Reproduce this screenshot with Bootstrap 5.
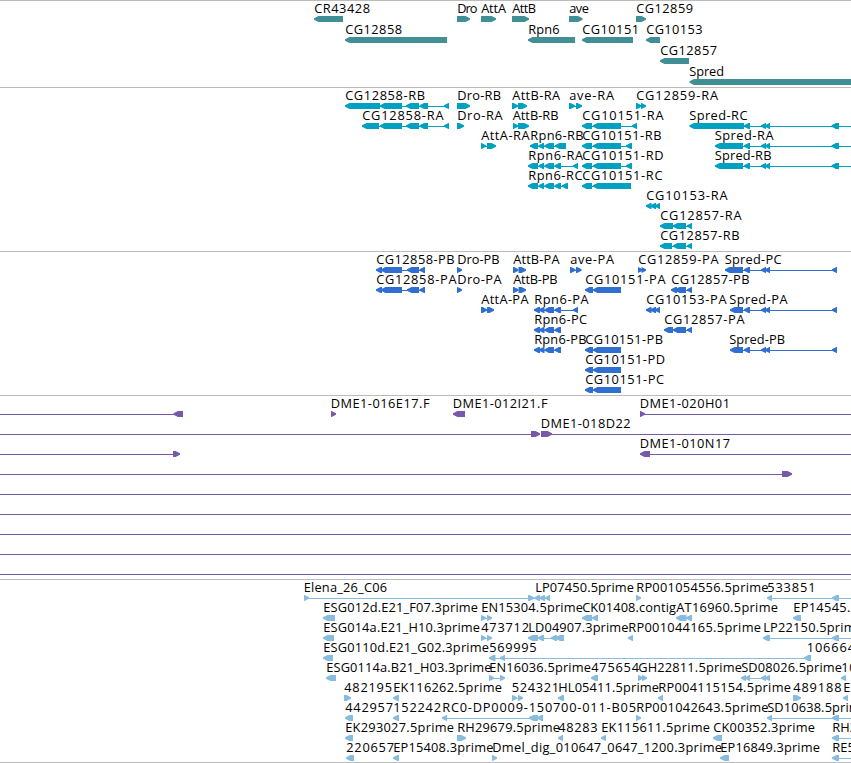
<!DOCTYPE html>
<html lang="en">
<head>
<meta charset="utf-8">
<meta name="viewport" content="width=device-width, initial-scale=1">
<title>Genome region</title>
<link href="https://cdn.jsdelivr.net/npm/bootstrap@5.3.0/dist/css/bootstrap.min.css" rel="stylesheet">
<style>
body { font-family: "Open Sans", "Noto Sans", sans-serif; }
.tier { border-top: 1px solid #bbb; overflow: hidden; padding-bottom: 3px; }
.tier-genes { color: #3f8f94; padding-bottom: 2px; }
.tier-transcripts { color: #00a0c0; }
.tier-proteins { color: #306fd0; }
.tier-clones { color: #7858a8; }
.tier-ests { color: #88bcde; padding-bottom: 2px; border-bottom: 1px solid #bbb; }
.lane { height: 20px; overflow: visible; }
.tier-genes .lane { height: 21px; }
.lane text { font-size: 12.8px; fill: #000; }
.lane path, .lane rect { fill: currentColor; }
</style>
<script src="https://cdn.jsdelivr.net/npm/bootstrap@5.3.0/dist/js/bootstrap.bundle.min.js"></script>
</head>
<body class="bg-white overflow-hidden">
<main class="d-flex flex-column" id="tiers"></main>
<script>
// Each lane lists features separated by ";".
// label: "T start end name", arrows: "L start end" / "R start end", connector: "- start end"
const spredR = 'L 744 750;L 761 766;L 765 770;L 831.5 839;- 740 851';
const spredP = 'L 744 750;L 761 766;L 765 770;L 832 837;- 740 837';
const tiers = {
genes: [
'T 314 370 CR43428;L 314 343;T 457 477.5 Dro;R 457 470;T 481 506 AttA;R 481 496;T 512 536 AttB;R 512 529;T 569 589 ave;R 569 582.5;T 636 693 CG12859;R 636 646',
'T 345 402 CG12858;L 345 447;T 528 559.5 Rpn6;L 528 575;T 582 639 CG10151;L 582 633;T 646 702.5 CG10153;L 646 660',
'T 660 717 CG12857;L 660 689',
'T 689 724 Spred;L 689.5 860'],
transcripts: [
'T 345 425 CG12858-RB;L 345 380;L 380 402;L 406 419;L 419.5 428;L 444 449;- 349 449;T 457 501 Dro-RB;R 457 470;T 512 560 AttB-RA;R 512 518;R 518 527;T 569 614 ave-RA;R 569 575;R 576 582;- 570 581;T 636 718 CG12859-RA;R 636 641.5;R 641 646',
'T 362 443.5 CG12858-RA;L 362 379;L 380 402;L 406 419;L 419.5 428;L 444 449;- 366 449;T 457 502.5 Dro-RA;R 457 464;T 512.5 558.5 AttB-RB;R 513 518;R 518 529;T 582 663.5 CG10151-RA;L 582 592;L 593 621;L 632 637;- 586 637;T 689 747.5 Spred-RC;L 689.5 744;' + spredR,
'T 481 529.5 AttA-RA;R 481 486;R 487 496;- 482 490;T 530 583.5 Rpn6-RB;L 530 538;L 538.5 544;L 544.5 554;L 555 566;- 534 564;T 582 661.5 CG10151-RB;L 582 592;L 593 621;L 626 632;- 586 632;T 714.5 773.5 Spred-RA;L 715 743;' + spredR,
'T 528 583 Rpn6-RA;L 528 538;L 538.5 544;L 544.5 554;L 554.5 561;L 573 578;- 532 578;T 582 663.5 CG10151-RD;L 582 592;L 593 621;L 626 632;- 586 632;T 714.5 771.5 Spred-RB;L 715 743;' + spredR,
'T 528 582.5 Rpn6-RC;L 528 538;L 538.5 544;L 544.5 554;L 554.5 561;L 562 568;- 532 568;T 582 662.5 CG10151-RC;L 582 592;L 593 631;- 586 600',
'T 646 727.5 CG10153-RA;L 646 651.5;L 650.5 656;L 655 660',
'T 660 741.5 CG12857-RA;L 660 673;L 673 686;L 687 692;- 664 692',
'T 660 739.5 CG12857-RB;L 660 672;L 673 686;L 687 692;- 664 692'],
proteins: [
'T 376 454.5 CG12858-PB;L 376 382;L 381 402;L 407 419;L 419.5 425;- 379 425;T 457 499.5 Dro-PB;R 457 462;T 513 559.5 AttB-PA;R 513 518.5;R 518.5 526;T 570 614 ave-PA;R 570 575.5;R 576 581.5;- 571 580;T 638 718.5 CG12859-PA;R 638 642.5;R 641.5 646;T 724.5 781.5 Spred-PC;L 725 743;' + spredP,
'T 376 456.5 CG12858-PA;L 376 382;L 381 402;L 407 419;L 419.5 425;- 379 425;T 457 501.5 Dro-PA;R 457 462;T 513 557.5 AttB-PB;R 513 518.5;R 518.5 526;T 585 665.5 CG10151-PA;L 585 593;L 593 621;- 589 600;T 671 749.5 CG12857-PB;L 671 677;L 675 686;L 687 692;- 673 692',
'T 481 528.5 AttA-PA;R 481 487;R 487 494;T 534 588.5 Rpn6-PA;L 534 540;L 539 544.5;L 544.5 554;L 554.5 561;L 573 578;- 536 578;T 646 726.5 CG10153-PA;L 646 651.5;L 650.5 656;L 655 660;T 729 787.5 Spred-PA;L 730 743;' + spredP,
'T 534 587 Rpn6-PC;L 534 540;L 539 544.5;L 544.5 554;L 554.5 561;- 536 561;T 664 744.5 CG12857-PA;L 664 673;L 673 686;L 687 692;- 668 692',
'T 534 586.5 Rpn6-PB;L 534 540;L 539 544.5;L 544.5 554;L 554.5 561;- 536 561;T 585 663 CG10151-PB;L 585 593;L 593 621;- 589 600;T 729 785 Spred-PB;L 730 743;' + spredP,
'T 585 665 CG10151-PD;L 585 593;L 593 621;- 589 600',
'T 585 664 CG10151-PC;L 585 593;L 593 621;- 589 600'],
clones: [
'- 0 176;L 173.5 183;T 330.5 429.5 DME1-016E17.F;R 331 336;T 452.5 547.5 DME1-012I21.F;L 453 465;T 639.5 730 DME1-020H01;R 640 645;- 641 851',
'- 0 535;R 531 540;T 540.5 630.5 DME1-018D22;R 541 552;- 542 851',
'- 0 175;R 173 180;T 639.5 730 DME1-010N17;L 640 650;- 645 851',
'- 0 785;R 782 792',
'- 0 851', '- 0 851', '- 0 851', '- 0 851', '- 0 851'],
ests: [
'T 303.5 387 Elena_26_C06;R 304 309;R 528 534;L 534.5 540;L 539.5 545;L 545 550;- 305 550;T 535 634 LP07450.5prime;T 636 768.5 RP001054556.5prime;R 636 641;T 767 815.5 533851;L 767 772;L 832 839;- 768 851',
'T 323 478 ESG012d.E21_F07.3prime;L 323 335;T 481 583 EN15304.5prime;R 481 486;R 487 492;- 482 490;T 582 676 CK01408.contig;L 582 592;L 592 598;T 676 778 AT16960.5prime;L 676 686.5;L 686 692;T 793 895 EP14545.5prime;L 793 801',
'T 323 480 ESG014a.E21_H10.3prime;L 323 334;T 481 529 473712;R 481 486;R 487 492;- 482 490;T 528 628.5 LD04907.3prime;L 528 538;L 538 544;L 551 557;L 555.5 564;- 531 564;T 628 761 RP001044165.5prime;L 628 633;T 763 863 LP22150.5prime;L 763 770;L 832 839;- 765 851',
'T 323 489 ESG0110d.E21_G02.3prime;L 323 333;T 489 536.5 569995;L 489 495.5;L 500 505;L 804 811;- 491 808;T 806.5 855 106664',
'T 326 491.5 ESG0114a.B21_H03.3prime;L 326 336;T 489 591 EN16036.5prime;R 489 494;R 500 505;- 490 503;T 591 639 475654;L 591 598;T 638 742 GH22811.5prime;R 638 643;R 642 647;T 741 842 SD08026.5prime;L 741 746;L 745 750;L 761 766;L 765 770;- 742 769;T 841 889 106664;L 841 846',
'T 344 392 482195;R 344 351;T 393 502 EK116262.5prime;L 393 399;T 511.5 559 524321;R 512 517;R 518 523;- 513 520;T 558 659 HL05411.5prime;L 558 564;T 658 791 RP004115154.5prime;L 658 663;T 793 841.5 489188;R 793 801;T 843 945 EP14545.5prime;L 843 848',
'T 345 393 442957;L 345 353;T 393 441 152242;L 393 399;T 442 636 RC0-DP0009-150700-011-B05;L 442 447;L 529 538;L 537 543;- 443 541;T 636 768.5 RP001042643.5prime;R 636 641;T 767 868 SD10638.5prime;L 767 772;L 832 839;- 768 851',
'T 345 454 EK293027.5prime;L 345 353;T 457 560 RH29679.5prime;R 457 466;T 558 597.5 48283;L 558 563;T 601 710 EK115611.5prime;L 601 606;T 713 815 CK00352.3prime;L 713 722;T 832 934 RH29679.5prime;L 832 839;- 835 851',
'T 346 394 220657;L 346 354;T 393 493.5 EP15408.3prime;L 393 399;T 492 722 Dmel_dig_010647_0647_1200.3prime;R 492 497;T 720 820 EP16849.3prime;L 720 729;T 832 932 RE55408.3prime;L 832 839;- 835 851']
};
const top0 = 15, mid = 18, bottom = 21, tip = 4.5;
function draw(item) {
  const [kind, a, b, name] = item.split(' ');
  const s = +a, e = +b;
  if (kind === 'T') return `<text x="${s + 0.2}" y="12" textLength="${e - s - 0.2}">${name}</text>`;
  if (kind === '-') return `<rect x="${s}" y="${mid}" width="${e - s}" height="1"/>`;
  if (kind === 'L') return `<path d="M${s} ${mid - 0.8}L${s + tip} ${top0}H${e}V${bottom}H${s + tip}L${s} ${mid + 0.8}Z"/>`;
  return `<path d="M${e} ${mid - 0.8}L${e - tip} ${top0}H${s}V${bottom}H${e - tip}L${e} ${mid + 0.8}Z"/>`;
}
document.getElementById('tiers').innerHTML = Object.entries(tiers).map(([name, lanes]) =>
  `<section class="tier tier-${name} d-flex flex-column">` +
  lanes.map(l => `<svg class="lane d-block w-100 flex-shrink-0">${l.split(';').map(draw).join('')}</svg>`).join('') +
  '</section>').join('');
</script>
</body>
</html>
